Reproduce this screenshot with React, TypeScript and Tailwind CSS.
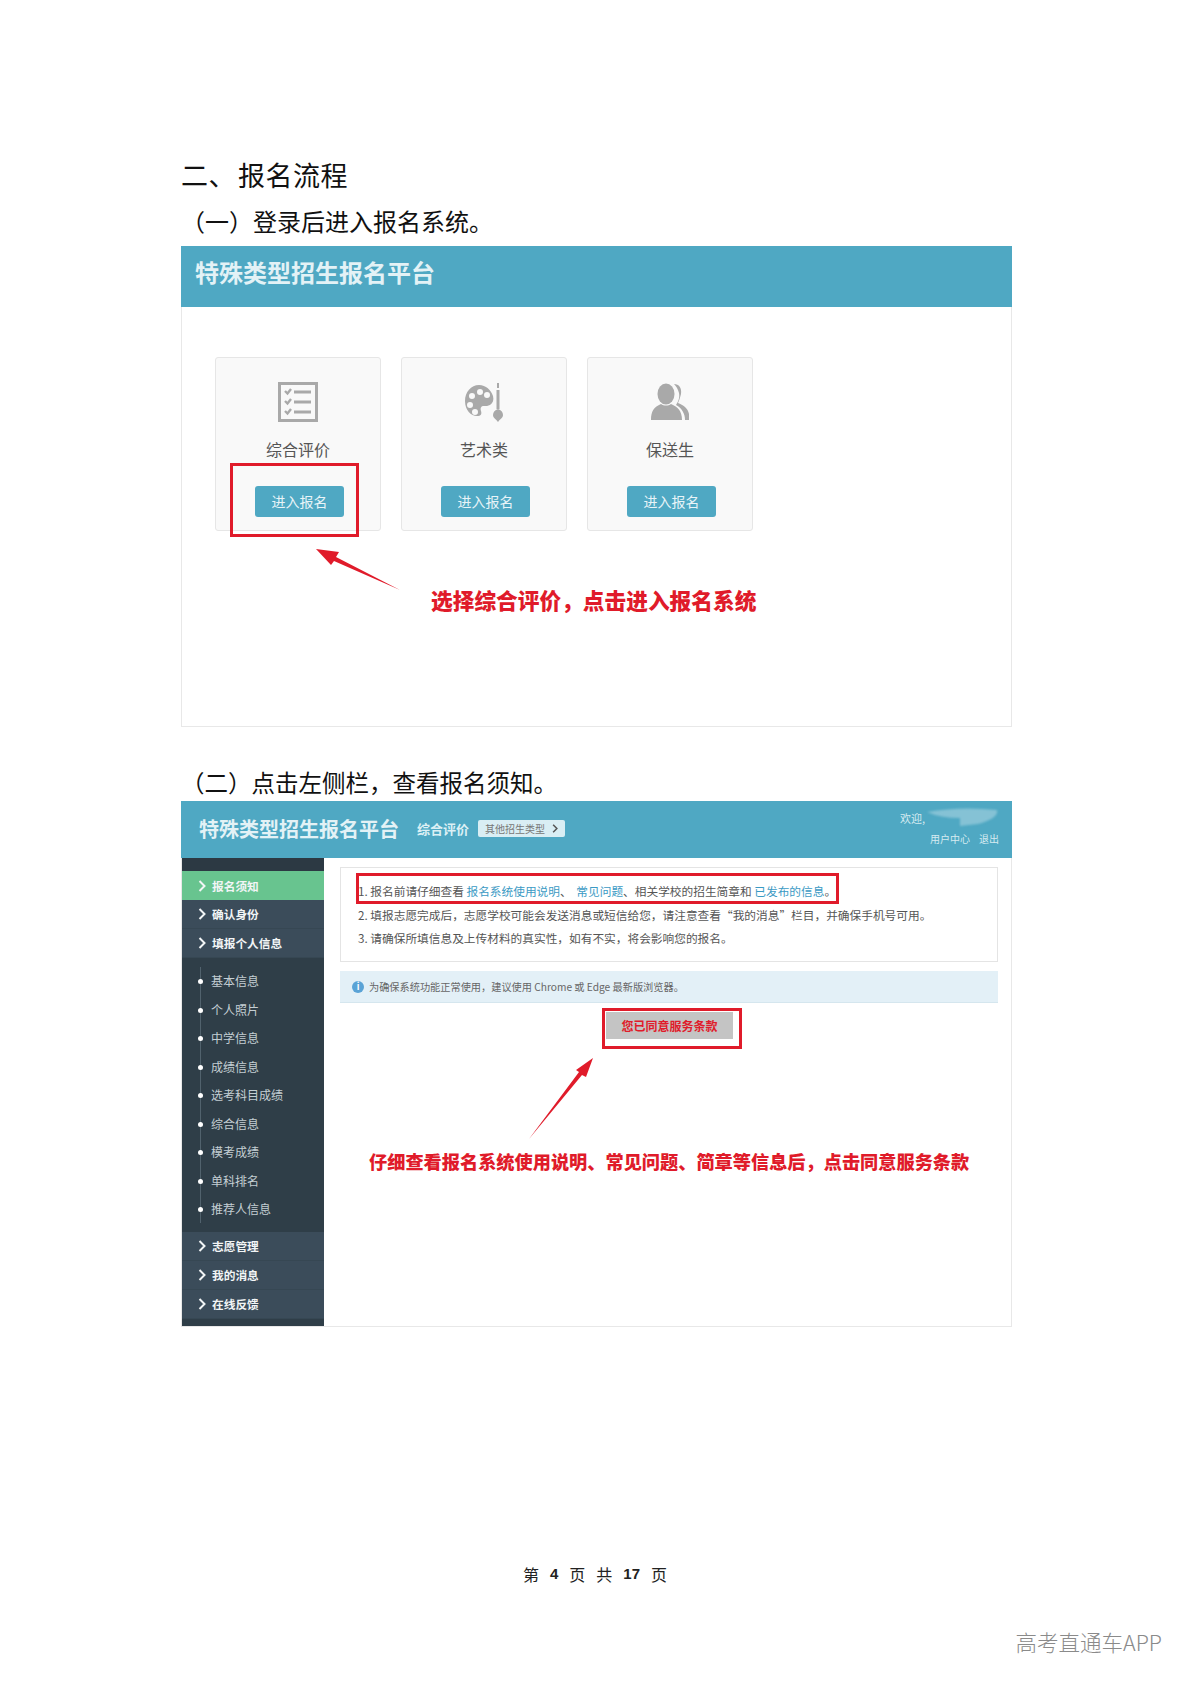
const CheckIcon = () => (
  <svg width="40" height="40" viewBox="0 0 40 40" fill="none" stroke="#a9a9a9">
    <rect x="1.5" y="1.5" width="37" height="37" strokeWidth="3" />
    <g strokeWidth="2.4">
      <path d="M7 9l2.5 2.5L13 7M7 19l2.5 2.5L13 17M7 29l2.5 2.5L13 27" />
      <path d="M16 10h17M16 20h17M16 30h17" strokeWidth="2.8" />
    </g>
  </svg>
);

const PaletteIcon = () => (
  <svg width="40" height="40" viewBox="0 0 40 40">
    <path
      fillRule="evenodd"
      fill="#a9a9a9"
      d="M15 3C7 3 1 10 1 19c0 9 6 15 12 15 4 0 5-2 4-5-1-3 0-5 3-5 2 0 4 0 6-1 3-2 4-5 3-9C27 8 22 3 15 3zM16 7a3 3 0 1 1 0 6 3 3 0 0 1 0-6zM8 11a3 3 0 1 1 0 6 3 3 0 0 1 0-6zM23 10a3 3 0 1 1 0 6 3 3 0 0 1 0-6zM6 20a3 3 0 1 1 0 6 3 3 0 0 1 0-6zM11 27a3 3 0 1 1 0 6 3 3 0 0 1 0-6z"
    />
    <rect x="33" y="1" width="2" height="5" fill="#a9a9a9" />
    <rect x="32.5" y="8" width="3" height="19" fill="#a9a9a9" />
    <path d="M34 27c3 1 5 3 5 6s-3 4-5 7c-2-3-5-4-5-7s2-5 5-6z" fill="#a9a9a9" />
  </svg>
);

const UsersIcon = () => (
  <svg width="40" height="38" viewBox="0 0 40 38" fill="#a9a9a9">
    <path d="M24 1c5 0 8 4 7 10-1 4-2 7-3 9 5 2 10 5 11 11v6h-4c0-6-3-12-9-15 2-3 4-7 3-12-1-4-3-7-5-9z" />
    <ellipse cx="16" cy="11" rx="8.5" ry="10.5" />
    <path d="M1 37c0-9 3-13 10-16 3 2 7 2 10 0 7 3 11 7 11 16z" />
  </svg>
);

const Chevron = ({ small }: { small?: boolean }) => (
  <svg width={small ? 6 : 8} height={small ? 9 : 12} viewBox="0 0 8 12" fill="none" stroke="currentColor" strokeWidth="2">
    <path d="M1.5 1l5 5-5 5" />
  </svg>
);

const cards = [
  { label: "综合评价", icon: <CheckIcon /> },
  { label: "艺术类", icon: <PaletteIcon /> },
  { label: "保送生", icon: <UsersIcon /> },
];

const topMenu = ["确认身份", "填报个人信息"];
const subMenu = ["基本信息", "个人照片", "中学信息", "成绩信息", "选考科目成绩", "综合信息", "模考成绩", "单科排名", "推荐人信息"];
const bottomMenu = ["志愿管理", "我的消息", "在线反馈"];

const MenuRow = ({ label, active }: { label: string; active?: boolean }) => (
  <div
    className={
      "flex h-[29px] items-center gap-[6px] pl-[16px] text-[11.7px] font-bold text-[#f2f5f6] border-b border-[#364753] " +
      (active ? "bg-[#68c48f] border-b-0" : "bg-[#3b4c5a]")
    }
  >
    <Chevron />
    <span>{label}</span>
  </div>
);

export default function App() {
  return (
    <div className="relative h-[1683px] w-[1190px] overflow-hidden bg-white font-['Noto_Sans_CJK_SC','Liberation_Sans',sans-serif]">
      <div className="flex flex-col pl-[181px] pr-[178px]">
        <h1 className="mt-[155px] flex h-[40px] items-center text-[27px] tracking-[0.5px] text-[#111] font-normal">二、<span className="ml-[2px]">报名流程</span></h1>
        <h2 className="flex h-[51px] items-start pt-[8px] text-[24px] leading-[36px] text-[#111] font-normal">（一）登录后进入报名系统。</h2>

        <section className="h-[481px] border-x border-b border-[#e8e8e8]">
          <div className="-mx-px flex h-[61px] items-center bg-[#4fa8c3] pl-[14px] pb-[10px] text-[24px] font-bold text-[#e3f2f6]">
            特殊类型招生报名平台
          </div>
          <div className="pl-[33px] pt-[50px]">
            <div className="flex gap-5">
              {cards.map((c) => (
                <div
                  key={c.label}
                  className="flex h-[174px] w-[166px] flex-col items-center rounded-[3px] border border-[#e6e6e6] bg-[#f9f9f9] pt-[24px]"
                >
                  <div className="flex h-[40px] items-center justify-center">{c.icon}</div>
                  <div className="mt-[15px] flex h-[24px] items-center text-[16px] text-[#555]">{c.label}</div>
                  <div className="ml-[3px] mt-[25px] flex h-[31px] w-[89px] items-center justify-center rounded-[3px] bg-[#4fa8c3] text-[14px] text-[#e8f4f8]">
                    进入报名
                  </div>
                </div>
              ))}
            </div>
            <div className="ml-[216px] mt-[54px] flex h-[30px] items-center text-[21.7px] font-black text-[#e01b2a]">
              选择综合评价，点击进入报名系统
            </div>
          </div>
        </section>

        <h2 className="flex h-[74px] items-end pb-[1px] text-[23.5px] leading-[36px] text-[#111] font-normal">（二）点击左侧栏，查看报名须知。</h2>

        <section className="h-[526px] border-x border-b border-[#e8e8e8]">
          <div className="-mx-px flex h-[57px] items-center bg-[#4fa8c3] pb-[2px] pl-[18px] pr-[13px]">
            <span className="text-[20px] font-bold text-[#e3f2f6]">特殊类型招生报名平台</span>
            <span className="ml-[18px] text-[13px] font-bold text-[#dcf0f5]">综合评价</span>
            <span className="ml-[9px] flex h-[17px] w-[87px] items-center justify-center gap-[7px] rounded-[2px] bg-[#d9eef4] text-[10px] text-[#777]">
              其他招生类型
              <span className="text-[#555]"><Chevron small /></span>
            </span>
            <div className="ml-auto flex flex-col items-end gap-[3px] text-[10px] leading-[17px] text-[#d5ebf1]">
              <span className="mr-[74px] text-[11px]">欢迎,</span>
              <span className="flex gap-[9px]">
                <span>用户中心</span>
                <span>退出</span>
              </span>
            </div>
          </div>
          <div className="flex h-[468px]">
            <aside className="flex w-[142px] flex-col bg-[#2f3e48]">
              <div className="h-[13px] bg-[#2c3943]" />
              <MenuRow label="报名须知" active />
              {topMenu.map((m) => (
                <MenuRow key={m} label={m} />
              ))}
              <ul className="ml-[18px] mt-[9px] h-[256px] border-l border-[#51626d]">
                {subMenu.map((s) => (
                  <li key={s} className="relative flex h-[28.5px] items-center pl-[10px] text-[12px] text-[#c4ced3]">
                    <span className="absolute left-[-3px] top-[12px] h-[5px] w-[5px] rounded-full bg-white" />
                    {s}
                  </li>
                ))}
              </ul>
              <div className="mt-[9px]">
                {bottomMenu.map((m) => (
                  <MenuRow key={m} label={m} />
                ))}
              </div>
            </aside>
            <main className="flex-1 pl-[16px] pr-[13px] pt-[9px]">
              <div className="h-[95px] border border-[#e4e4e4] pl-[17px] pt-[11px] text-[11.7px] leading-[23.5px] text-[#555]">
                <p>
                  1. 报名前请仔细查看 <span className="text-[#3b9ac4]">报名系统使用说明</span>、 <span className="ml-[2px] text-[#3b9ac4]">常见问题</span>、相关学校的招生简章和 <span className="text-[#3b9ac4]">已发布的信息</span>。
                </p>
                <p>2. 填报志愿完成后，志愿学校可能会发送消息或短信给您，请注意查看“我的消息”栏目，并确保手机号可用。</p>
                <p>3. 请确保所填信息及上传材料的真实性，如有不实，将会影响您的报名。</p>
              </div>
              <div className="mt-[9px] flex h-[32px] items-center gap-[5px] border-b border-[#d5e6ee] bg-[#e3f0f7] pl-[12px] text-[10.2px] text-[#666]">
                <span className="flex h-[12px] w-[12px] items-center justify-center rounded-full bg-[#5aa3d6] text-[9px] font-bold text-white">i</span>
                <span className="pt-[1px]">为确保系统功能正常使用，建议使用 Chrome 或 Edge 最新版浏览器。</span>
              </div>
              <div className="ml-[266px] mt-[9px] flex h-[27px] w-[127px] items-center justify-center bg-[#c4c4c4] text-[12px] font-bold text-[#e01b2a]">
                您已同意服务条款
              </div>
              <div className="ml-[29px] mt-[108px] flex h-[30px] items-center whitespace-nowrap text-[18.2px] font-black text-[#e01b2a]">
                仔细查看报名系统使用说明、常见问题、简章等信息后，点击同意服务条款
              </div>
            </main>
          </div>
        </section>

        <footer className="ml-[-3px] mt-[235px] flex h-[24px] items-center justify-center gap-[11px] text-[16px] text-[#222]">
          <span>第</span>
          <span className="font-['Liberation_Sans',sans-serif] text-[15px] font-bold">4</span>
          <span>页</span>
          <span>共</span>
          <span className="font-['Liberation_Sans',sans-serif] text-[15px] font-bold">17</span>
          <span>页</span>
        </footer>
      </div>

      <div className="absolute right-[28px] top-[1627px] text-[21.5px] leading-[30px] font-light text-[#8a8a8a]">高考直通车APP</div>

      {/* redaction over the user name */}
      <svg className="absolute left-[925px] top-[806px] blur-[1px]" width="76" height="22" viewBox="0 0 76 22">
        <path d="M2 6Q35 0 72 4Q74 12 53 18L35 20L35 12Q15 12 2 6z" fill="#85c2d5" />
      </svg>

      {/* red annotation frames */}
      <div className="absolute left-[230px] top-[463px] h-[74px] w-[129px] border-[3px] border-[#e01b2a]" />
      <div className="absolute left-[356px] top-[873px] h-[31px] w-[483px] border-[3px] border-[#e01b2a]" />
      <div className="absolute left-[602px] top-[1008px] h-[41px] w-[140px] border-[3px] border-[#e01b2a]" />

      {/* annotation arrows */}
      <svg className="pointer-events-none absolute left-0 top-0" width="1190" height="1683" viewBox="0 0 1190 1683">
        <polygon points="316,549 339,552 336,557 400,590 334,561 331,565" fill="#e01b2a" />
        <polygon points="593,1058 586,1077 582,1075 529,1139 579,1072 576,1070" fill="#e01b2a" />
      </svg>
    </div>
  );
}
